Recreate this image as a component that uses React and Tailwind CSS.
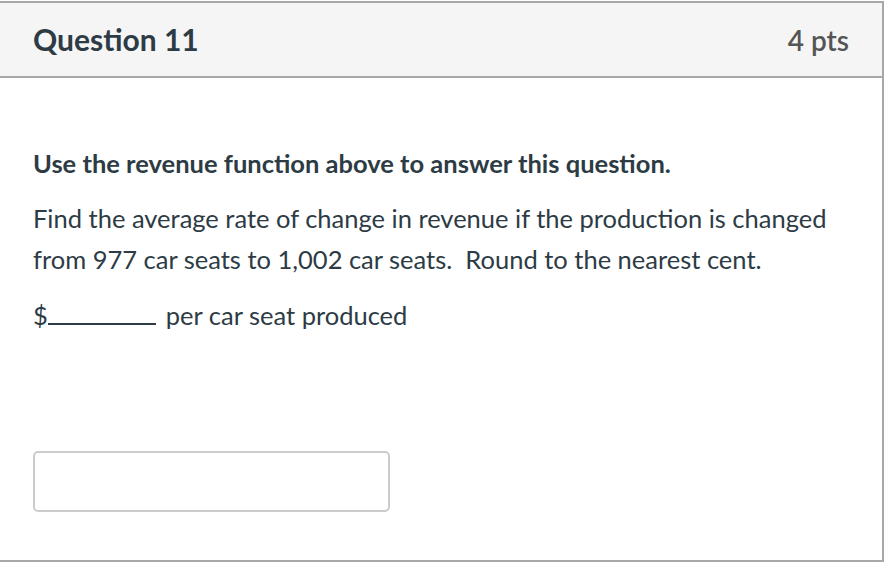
export default function App() {
  return (
    <div className="w-[890px] h-[568px] bg-white pt-px" style={{ fontFamily: 'Lato, "Noto Sans", sans-serif' }}>
      <div className="w-[884px] h-[561px] border-2 border-l-0 border-[#a8a8a8] flex flex-col">
        <div className="h-[75px] bg-[#f5f5f5] border-b-2 border-[#a8a8a8] flex items-center justify-between pl-[33px] pr-[33px]">
          <h2 className="text-[30px] font-bold text-[#2d3b45]">Question 11</h2>
          <span className="text-[28px] font-semibold text-[#555555]">4 pts</span>
        </div>
        <div className="pl-[33px] pr-[20px] pt-[70px] text-[#2d3b45]">
          <p className="text-[25.5px] font-bold leading-[30px]">Use the revenue function above to answer this question.</p>
          <p className="mt-[20px] text-[25.5px] leading-[41px]">
            Find the average rate of change in revenue if the production is changed from 977 car seats to 1,002 car seats.&nbsp; Round to the nearest cent.
          </p>
          <p className="mt-[15px] text-[25.5px] leading-[41px] flex items-baseline">
            <span>$</span>
            <span className="inline-block w-[108px] border-b-2 border-[#2d3b45] mr-[10px]"></span>
            <span>per car seat produced</span>
          </p>
          <input
            type="text"
            className="mt-[115px] block w-[357px] h-[61px] border-2 border-[#cccccc] rounded-[5px] bg-white"
          />
        </div>
      </div>
    </div>
  );
}
